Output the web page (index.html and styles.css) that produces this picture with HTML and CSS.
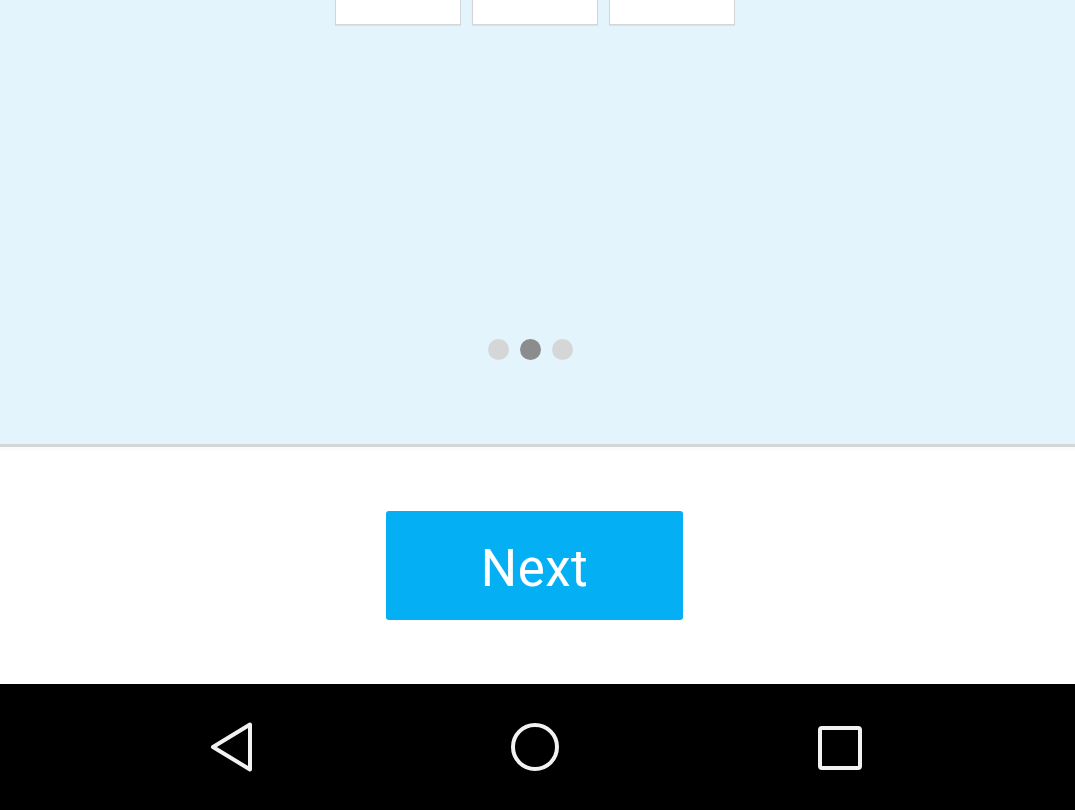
FILE: index.html
```html
<!DOCTYPE html>
<html lang="en">
<head>
<meta charset="utf-8">
<title>Next</title>
<link rel="stylesheet" href="styles.css">
</head>
<body>
<div class="screen">
  <section class="pager">
    <div class="cards">
      <div class="card"></div>
      <div class="card"></div>
      <div class="card"></div>
    </div>
    <div class="dots">
      <span class="dot"></span>
      <span class="dot active"></span>
      <span class="dot"></span>
    </div>
  </section>
  <section class="footer">
    <button class="next-btn" type="button">Next</button>
  </section>
  <nav class="navbar">
    <svg class="nav-icon back" width="48" height="52" viewBox="0 0 48 52">
      <path d="M41 3.5 L41 48.5 L4 26 Z" fill="none" stroke="#f2f2f2" stroke-width="4" stroke-linejoin="round"/>
    </svg>
    <svg class="nav-icon home" width="52" height="52" viewBox="0 0 52 52">
      <circle cx="26" cy="26" r="22" fill="none" stroke="#f2f2f2" stroke-width="4"/>
    </svg>
    <svg class="nav-icon recent" width="48" height="48" viewBox="0 0 48 48">
      <rect x="4" y="4" width="40" height="40" rx="2" fill="none" stroke="#f2f2f2" stroke-width="4"/>
    </svg>
  </nav>
</div>
</body>
</html>
```

FILE: styles.css
```css
* { box-sizing: border-box; }
html, body {
  margin: 0;
  padding: 0;
  width: 1075px;
  height: 810px;
  overflow: hidden;
  font-family: Roboto, "Noto Sans", Arial, sans-serif;
}
.screen {
  display: flex;
  flex-direction: column;
  width: 1075px;
  height: 810px;
}
.pager {
  height: 444px;
  background: #e3f4fd;
  display: flex;
  flex-direction: column;
  align-items: center;
}
.cards {
  display: flex;
  gap: 11px;
  padding-right: 5px;
  height: 25px;
}
.card {
  width: 126px;
  height: 25px;
  background: #ffffff;
  border: 1px solid #d3d6d8;
  border-top: none;
  box-shadow: 0 1px 1px rgba(0,0,0,0.06);
}
.dots {
  display: flex;
  gap: 11px;
  margin-top: 314px;
  padding-right: 15px;
}
.dot {
  width: 21px;
  height: 21px;
  border-radius: 50%;
  background: #d5d7d7;
}
.dot.active { background: #8b8c8c; }
.footer {
  flex: 1;
  background: #ffffff;
  border-top: 3px solid #d5d7d6;
  box-shadow: inset 0 4px 4px -3px rgba(0,0,0,0.04);
  display: flex;
  justify-content: center;
  align-items: flex-start;
  padding-top: 64px;
  padding-right: 6px;
}
.next-btn {
  width: 297px;
  height: 109px;
  border: none;
  border-radius: 3px;
  background: #05aff4;
  color: #ffffff;
  font-family: Roboto, "Noto Sans", Arial, sans-serif;
  font-size: 51px;
  letter-spacing: 0.5px;
  padding: 6px 0 0 0;
  cursor: pointer;
}
.navbar {
  height: 126px;
  background: #000000;
  display: flex;
  align-items: center;
  padding-left: 209px;
}
.nav-icon { display: block; }
.home { margin-left: 252px; }
.recent { margin-left: 255px; margin-top: 2px; }
```
